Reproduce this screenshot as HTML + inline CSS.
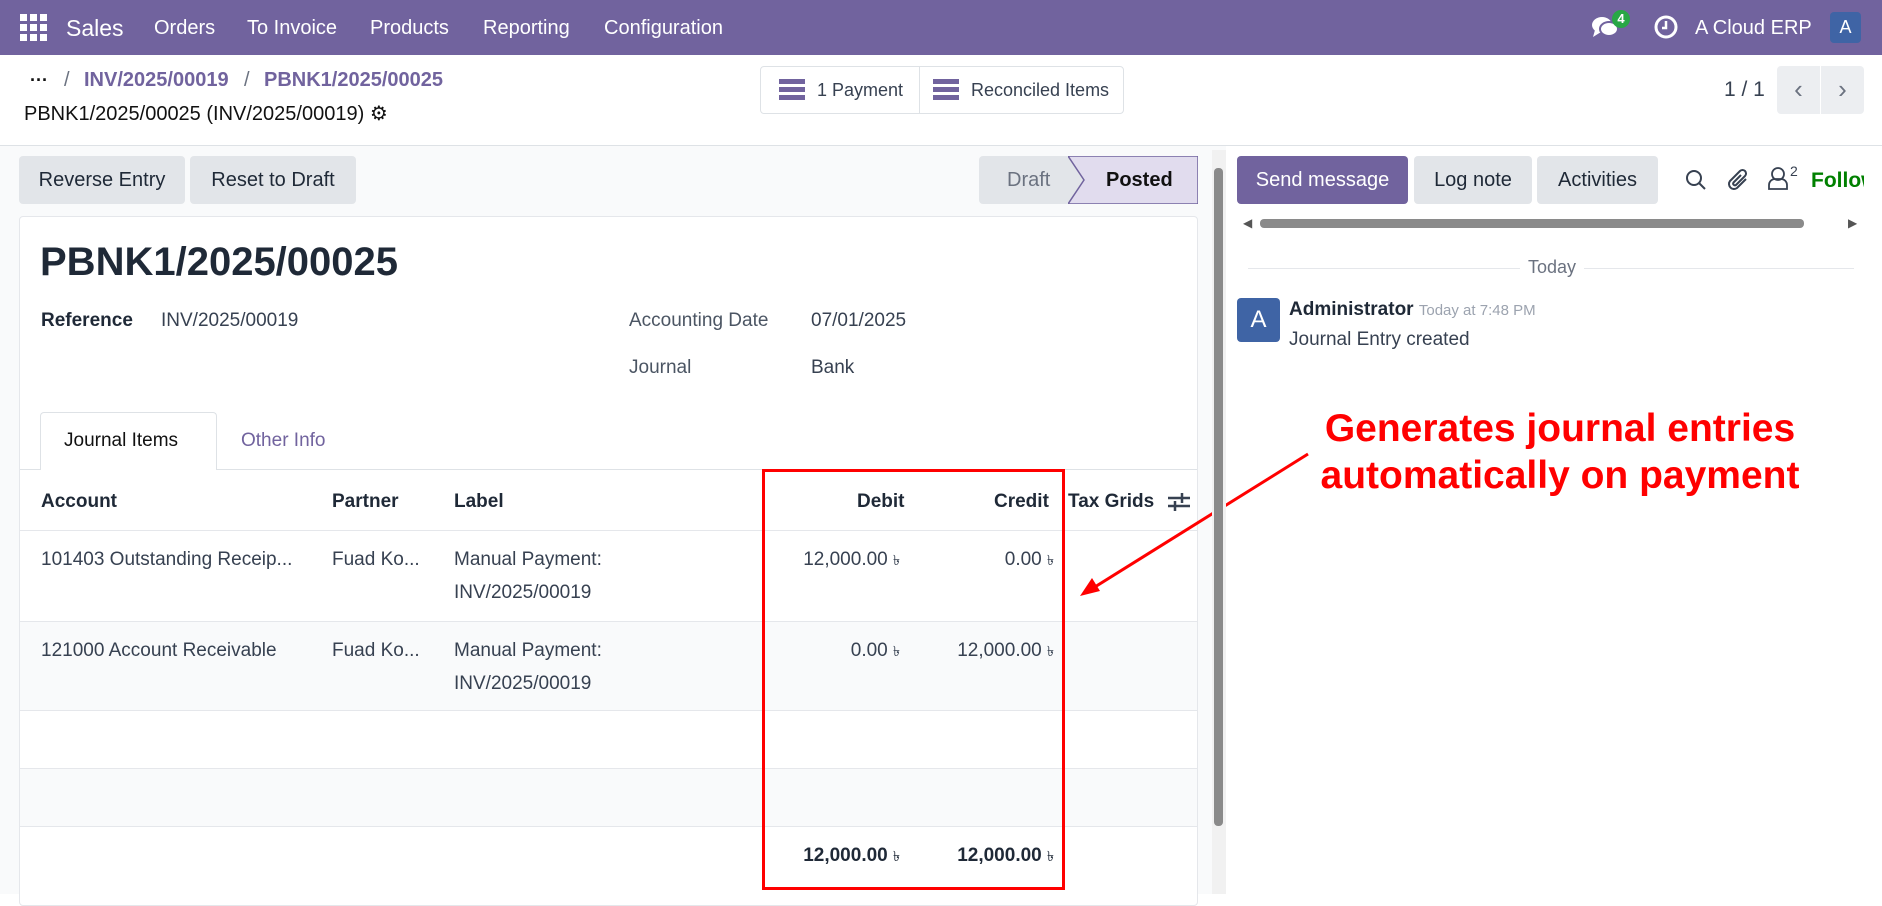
<!DOCTYPE html>
<html><head><meta charset="utf-8"><style>
*{box-sizing:border-box;margin:0;padding:0}
body{width:1882px;height:894px;overflow:hidden;font-family:"Liberation Sans",sans-serif;color:#374151;font-size:19px;background:#fff;position:relative}
.a{position:absolute;white-space:nowrap}
.nav{position:absolute;left:0;top:0;width:1882px;height:55px;background:#71639e;color:#fff}
.nav .a{top:17px;font-size:20px}
.btn{position:absolute;background:#e2e5e9;border-radius:4px;color:#1f2937;font-size:20px;display:flex;align-items:center;justify-content:center}
.row{position:absolute;left:20px;width:1177px;border-bottom:1px solid #e5e7eb}
</style></head><body>
<div class="nav">
 <svg class="a" style="left:20px;top:14px" width="27" height="27" viewBox="0 0 27 27" fill="#fff"><rect x="0" y="0" width="7" height="7"/><rect x="10" y="0" width="7" height="7"/><rect x="20" y="0" width="7" height="7"/><rect x="0" y="10" width="7" height="7"/><rect x="10" y="10" width="7" height="7"/><rect x="20" y="10" width="7" height="7"/><rect x="0" y="20" width="7" height="7"/><rect x="10" y="20" width="7" height="7"/><rect x="20" y="20" width="7" height="7"/></svg>
 <span class="a" style="left:66px;font-size:23px;top:15px !important">Sales</span>
 <span class="a" style="left:154px">Orders</span>
 <span class="a" style="left:247px">To Invoice</span>
 <span class="a" style="left:370px">Products</span>
 <span class="a" style="left:483px">Reporting</span>
 <span class="a" style="left:604px">Configuration</span>
 <svg class="a" style="left:1591px;top:15px" width="30" height="26" viewBox="0 0 30 26" fill="#fff"><ellipse cx="11" cy="10" rx="10" ry="8"/><path d="M4 15 L2 22 L10 17Z"/><ellipse cx="18" cy="14" rx="9" ry="7" stroke="#71639e" stroke-width="2"/></svg>
 <span class="a" style="left:1612px;top:10px !important;width:18px;height:18px;border-radius:9px;background:#28a745;font-size:13px !important;text-align:center;line-height:18px;font-weight:bold">4</span>
 <svg class="a" style="left:1654px;top:15px" width="24" height="24" viewBox="0 0 24 24"><circle cx="12" cy="12" r="10" fill="none" stroke="#fff" stroke-width="3"/><path d="M12 6v7h-4" stroke="#fff" stroke-width="2.5" fill="none"/></svg>
 <span class="a" style="left:1695px">A Cloud ERP</span>
 <span class="a" style="left:1830px;top:12px !important;width:31px;height:31px;background:#3f64a5;border-radius:4px;font-size:18px !important;text-align:center;line-height:31px">A</span>
</div>
<span class="a" style="left:30px;top:70px;font-size:18px;font-weight:bold;color:#111">···</span>
<span class="a" style="left:64px;top:69px;font-size:20px;color:#6b7280">/</span>
<span class="a" style="left:84px;top:69px;font-size:20px;color:#71639e;font-weight:bold">INV/2025/00019</span>
<span class="a" style="left:244px;top:69px;font-size:20px;color:#6b7280">/</span>
<span class="a" style="left:264px;top:69px;font-size:20px;color:#71639e;font-weight:bold">PBNK1/2025/00025</span>
<span class="a" style="left:24px;top:101px;font-size:20px;color:#111">PBNK1/2025/00025 (INV/2025/00019) <span style="font-size:20px">⚙</span></span>
<div class="a" style="left:760px;top:66px;width:364px;height:48px;border:1px solid #dee2e6;border-radius:4px"></div>
<div class="a" style="left:919px;top:67px;width:1px;height:46px;background:#dee2e6"></div>
<svg class="a" style="left:779px;top:79px" width="26" height="22" fill="#71639e"><rect y="0" width="26" height="5"/><rect y="8" width="26" height="5"/><rect y="16" width="26" height="5"/></svg>
<span class="a" style="left:817px;top:80px;font-size:18px;color:#374151">1 Payment</span>
<svg class="a" style="left:933px;top:79px" width="26" height="22" fill="#71639e"><rect y="0" width="26" height="5"/><rect y="8" width="26" height="5"/><rect y="16" width="26" height="5"/></svg>
<span class="a" style="left:971px;top:80px;font-size:18px;color:#374151">Reconciled Items</span>
<span class="a" style="left:1724px;top:78px;font-size:21px;color:#374151">1 / 1</span>
<div class="a" style="left:1777px;top:66px;width:43px;height:48px;background:#eceef1;border-radius:4px 0 0 4px;font-size:26px;text-align:center;line-height:46px;color:#6b7280">‹</div>
<div class="a" style="left:1821px;top:66px;width:43px;height:48px;background:#eceef1;border-radius:0 4px 4px 0;font-size:26px;text-align:center;line-height:46px;color:#6b7280">›</div>
<div class="a" style="left:0;top:145px;width:1882px;height:1px;background:#dee2e6"></div>
<div class="a" style="left:0;top:146px;width:1226px;height:748px;background:#f9fafb"></div>
<div class="btn" style="left:19px;top:156px;width:166px;height:48px">Reverse Entry</div>
<div class="btn" style="left:190px;top:156px;width:166px;height:48px">Reset to Draft</div>
<div class="a" style="left:979px;top:156px;width:219px;height:48px;background:#e2e5e9;border-radius:4px"></div>
<svg class="a" style="left:1068px;top:156px" width="130" height="48"><path d="M0 0 L130 0 L130 48 L0 48 L16 24Z" fill="#e1dcee" stroke="#71639e" stroke-width="1.5"/></svg>
<span class="a" style="left:1007px;top:169px;font-size:20px;color:#6b7280">Draft</span>
<span class="a" style="left:1106px;top:169px;font-size:20px;color:#111;font-weight:bold">Posted</span>
<div class="a" style="left:19px;top:216px;width:1179px;height:690px;background:#fff;border:1px solid #e5e7eb;border-radius:4px"></div>
<span class="a" style="left:40px;top:240px;font-size:40px;font-weight:bold;color:#1f2937">PBNK1/2025/00025</span>
<span class="a" style="left:41px;top:310px;font-weight:bold;color:#1f2937">Reference</span>
<span class="a" style="left:161px;top:310px">INV/2025/00019</span>
<span class="a" style="left:629px;top:310px;color:#4b5563">Accounting Date</span>
<span class="a" style="left:811px;top:310px">07/01/2025</span>
<span class="a" style="left:629px;top:357px;color:#4b5563">Journal</span>
<span class="a" style="left:811px;top:357px">Bank</span>
<div class="a" style="left:20px;top:469px;width:1177px;height:1px;background:#dee2e6"></div>
<div class="a" style="left:40px;top:412px;width:177px;height:58px;background:#fff;border:1px solid #dee2e6;border-bottom:none;border-radius:4px 4px 0 0"></div>
<span class="a" style="left:64px;top:430px;color:#111">Journal Items</span>
<span class="a" style="left:241px;top:430px;color:#71639e">Other Info</span>
<div class="row" style="top:470px;height:61px"></div>
<span class="a" style="left:41px;top:491px;font-weight:bold;color:#1f2937">Account</span>
<span class="a" style="left:332px;top:491px;font-weight:bold;color:#1f2937">Partner</span>
<span class="a" style="left:454px;top:491px;font-weight:bold;color:#1f2937">Label</span>
<span class="a" style="left:857px;top:491px;font-weight:bold;color:#1f2937">Debit</span>
<span class="a" style="left:994px;top:491px;font-weight:bold;color:#1f2937">Credit</span>
<span class="a" style="left:1068px;top:491px;font-weight:bold;color:#1f2937">Tax Grids</span>
<svg class="a" style="left:1167px;top:491px" width="24" height="22" stroke="#374151" stroke-width="2.5"><path d="M1 7h22M1 15h22"/><path d="M15 2v10M8 10v10"/></svg>
<div class="row" style="top:531px;height:91px"></div>
<span class="a" style="left:41px;top:549px">101403 Outstanding Receip...</span>
<span class="a" style="left:332px;top:549px">Fuad Ko...</span>
<span class="a" style="left:454px;top:549px">Manual Payment:</span>
<span class="a" style="left:454px;top:582px">INV/2025/00019</span>
<span class="a" style="right:982px;top:549px">12,000.00 <small style="font-size:14px">৳</small></span>
<span class="a" style="right:828px;top:549px">0.00 <small style="font-size:14px">৳</small></span>
<div class="row" style="top:622px;height:89px;background:#f9fafb"></div>
<span class="a" style="left:41px;top:640px">121000 Account Receivable</span>
<span class="a" style="left:332px;top:640px">Fuad Ko...</span>
<span class="a" style="left:454px;top:640px">Manual Payment:</span>
<span class="a" style="left:454px;top:673px">INV/2025/00019</span>
<span class="a" style="right:982px;top:640px">0.00 <small style="font-size:14px">৳</small></span>
<span class="a" style="right:828px;top:640px">12,000.00 <small style="font-size:14px">৳</small></span>
<div class="row" style="top:711px;height:58px"></div>
<div class="row" style="top:769px;height:58px;background:#f9fafb"></div>
<span class="a" style="right:982px;top:845px;font-weight:bold;color:#1f2937">12,000.00 <small style="font-size:14px;font-weight:normal">৳</small></span>
<span class="a" style="right:828px;top:845px;font-weight:bold;color:#1f2937">12,000.00 <small style="font-size:14px;font-weight:normal">৳</small></span>
<div class="a" style="left:762px;top:469px;width:303px;height:421px;border:3px solid #f00"></div>
<svg class="a" style="left:1070px;top:440px" width="250" height="170"><line x1="238" y1="14" x2="20" y2="150" stroke="#f00" stroke-width="3"/><path d="M10 156 L22 138 L30 151Z" fill="#f00"/></svg>
<div class="a" style="left:1300px;top:405px;width:520px;text-align:center;font-size:39px;font-weight:bold;color:#f00;line-height:47px">Generates journal entries<br>automatically on payment</div>
<div class="a" style="left:1212px;top:150px;width:14px;height:744px;background:#f1f1f1"></div>
<div class="a" style="left:1214px;top:168px;width:9px;height:658px;background:#8a8a8a;border-radius:4px"></div>
<div class="btn" style="left:1237px;top:156px;width:171px;height:48px;background:#71639e;color:#fff">Send message</div>
<div class="btn" style="left:1414px;top:156px;width:118px;height:48px">Log note</div>
<div class="btn" style="left:1537px;top:156px;width:121px;height:48px">Activities</div>
<svg class="a" style="left:1685px;top:169px" width="22" height="22" stroke="#374151" stroke-width="2" fill="none"><circle cx="9" cy="9" r="7"/><path d="M14 14l6 6"/></svg>
<svg class="a" style="left:1726px;top:165px" width="26" height="28" viewBox="0 0 26 28" fill="none" stroke="#374151" stroke-width="2"><path d="M20 14 L11 23 a5 5 0 0 1 -7 -7 L14 6 a3.5 3.5 0 0 1 5 5 L10 20 a1.8 1.8 0 0 1 -2.5 -2.5 L15 10"/></svg>
<svg class="a" style="left:1767px;top:166px" width="22" height="24" stroke="#374151" stroke-width="1.8" fill="none"><circle cx="11" cy="8" r="6"/><path d="M2 23v-4a6 6 0 0 1 6-6h6a6 6 0 0 1 6 6v4z"/></svg>
<span class="a" style="left:1790px;top:163px;font-size:14px">2</span>
<div class="a" style="left:1811px;top:166px;width:53px;height:30px;overflow:hidden"><span style="font-size:21px;color:#008000;font-weight:bold;position:absolute;top:3px;left:0">Follow</span></div>
<div class="a" style="left:1260px;top:219px;width:544px;height:9px;background:#8a8a8a;border-radius:4px"></div>
<span class="a" style="left:1243px;top:216px;font-size:12px;color:#555">◀</span>
<span class="a" style="left:1848px;top:216px;font-size:12px;color:#555">▶</span>
<div class="a" style="left:1248px;top:268px;width:606px;height:1px;background:#e5e7eb"></div>
<span class="a" style="left:1520px;top:257px;background:#fff;padding:0 8px;font-size:18px;color:#6b7280;background:#fff">Today</span>
<div class="a" style="left:1237px;top:298px;width:43px;height:44px;background:#3f64a5;border-radius:4px;color:#fff;font-size:24px;text-align:center;line-height:44px">A</div>
<span class="a" style="left:1289px;top:299px;font-weight:bold;color:#1f2937">Administrator <span style="font-weight:normal;font-size:15px;color:#9ca3af">Today at 7:48 PM</span></span>
<span class="a" style="left:1289px;top:329px">Journal Entry created</span>
</body></html>
